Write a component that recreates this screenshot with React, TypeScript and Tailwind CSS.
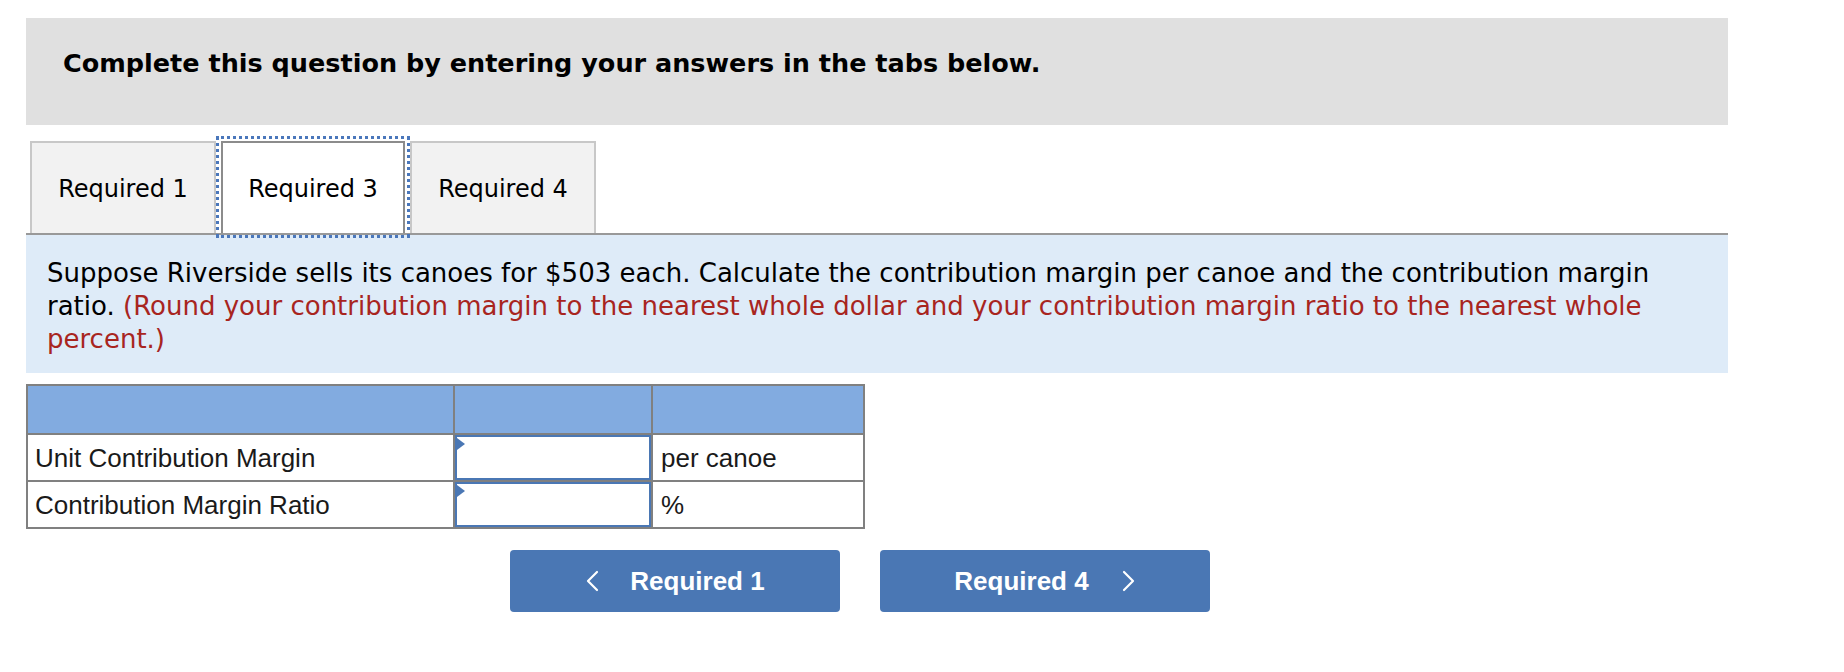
import React from 'react';

const tabs = ['Required 1', 'Required 3', 'Required 4'];

const rows = [
  { label: 'Unit Contribution Margin', unit: 'per canoe' },
  { label: 'Contribution Margin Ratio', unit: '%' },
];

const Chevron: React.FC<{ dir: 'left' | 'right' }> = ({ dir }) => (
  <svg width="15" height="22" viewBox="0 0 15 22" fill="none" stroke="currentColor" strokeWidth="2.2" strokeLinecap="round" strokeLinejoin="round">
    {dir === 'left' ? <polyline points="12,2 3,11 12,20" /> : <polyline points="3,2 12,11 3,20" />}
  </svg>
);

const App: React.FC = () => {
  return (
    <div className="min-h-[672px] bg-white pt-[18px] pl-[26px] w-[1844px] font-['DejaVu_Sans',sans-serif]">
      <div className="w-[1702px]">
        {/* heading */}
        <div className="h-[107px] bg-[#e0e0e0] pl-[37px] pt-[30px]">
          <h2 className="text-[25.5px] font-bold text-black leading-[30px]">
            Complete this question by entering your answers in the tabs below.
          </h2>
        </div>

        {/* tabs */}
        <div className="mt-[16px] flex pl-[4px] border-b-2 border-[#999999]">
          {tabs.map((t, i) =>
            i === 1 ? (
              <div
                key={t}
                className="-mt-[5px] -mb-[5px] border-[3px] border-dotted border-[#4a77bb] px-[2px] pt-[2px] z-10"
              >
                <div className="w-[184px] h-[92px] bg-white border-x-2 border-t-2 border-[#8c8c8c] flex items-center justify-center pt-[2px] text-[24px] text-black">
                  {t}
                </div>
              </div>
            ) : (
              <div
                key={t}
                className="w-[186px] h-[92px] bg-[#f2f2f2] border-x-2 border-t-2 border-[#c8c8c8] flex items-center justify-center pt-[2px] text-[24px] text-black"
              >
                {t}
              </div>
            )
          )}
        </div>

        {/* question */}
        <div className="bg-[#deebf8] pl-[21px] pr-[60px] pt-[22px] pb-[17px] text-[26px] leading-[33px] text-black">
          Suppose Riverside sells its canoes for $503 each. Calculate the contribution margin per canoe and the
          contribution margin ratio.{' '}
          <span className="text-[#a8251f]">
            (Round your contribution margin to the nearest whole dollar and your contribution margin ratio to the
            nearest whole percent.)
          </span>
        </div>

        {/* answer table */}
        <table className="mt-[11px] border-collapse border-2 border-[#808080] font-['Liberation_Sans',Arial,sans-serif] text-[26px] text-[#1a1a1a]">
          <thead>
            <tr className="h-[49px] bg-[#82abe0]">
              <th className="w-[427px] border-2 border-[#808080]"></th>
              <th className="w-[198px] border-2 border-[#808080]"></th>
              <th className="w-[212px] border-2 border-[#808080]"></th>
            </tr>
          </thead>
          <tbody>
            {rows.map((r) => (
              <tr key={r.label} className="h-[47px]">
                <td className="border-2 border-[#808080] pl-[7px] leading-none">{r.label}</td>
                <td className="border-2 border-[#808080] p-0">
                  <div className="relative h-[45px] border-2 border-[#4a77b4] bg-white">
                    <span className="absolute left-0 top-[1px] w-0 h-0 border-y-[6px] border-y-transparent border-l-[8px] border-l-[#4a77b4]"></span>
                  </div>
                </td>
                <td className="border-2 border-[#808080] pl-[8px] leading-none">{r.unit}</td>
              </tr>
            ))}
          </tbody>
        </table>

        {/* navigation */}
        <div className="mt-[21px] pl-[484px] flex gap-[40px] font-['Liberation_Sans',Arial,sans-serif]">
          <button className="w-[330px] h-[62px] rounded-[4px] bg-[#4a77b4] text-white text-[26px] font-bold flex items-center justify-center gap-[30px]">
            <Chevron dir="left" />
            <span>Required 1</span>
          </button>
          <button className="w-[330px] h-[62px] rounded-[4px] bg-[#4a77b4] text-white text-[26px] font-bold flex items-center justify-center gap-[32px]">
            <span>Required 4</span>
            <Chevron dir="right" />
          </button>
        </div>
      </div>
    </div>
  );
};

export default App;
